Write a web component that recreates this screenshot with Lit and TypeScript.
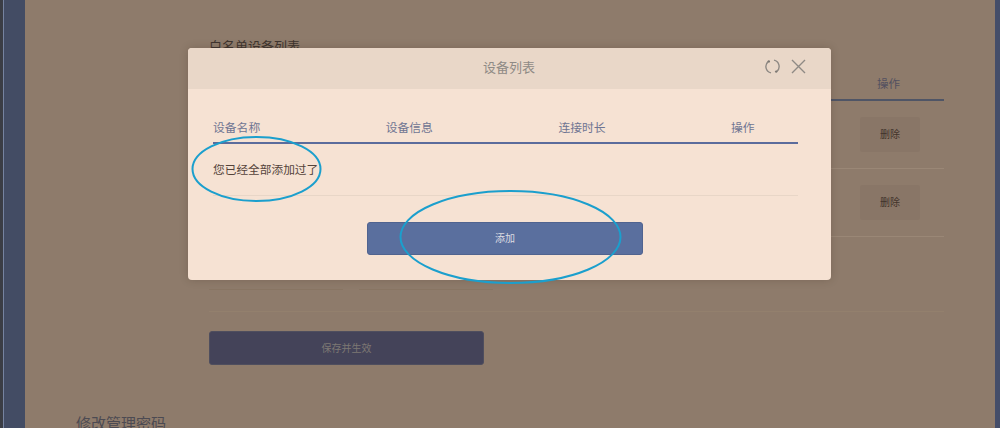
import { LitElement, html, css } from "lit";
import { customElement } from "lit/decorators.js";

@customElement("app-root")
export class AppRoot extends LitElement {
  static styles = css`
    :host {
      display: block;
      position: relative;
      width: 1000px;
      height: 428px;
      overflow: hidden;
      background: #8e7b6b;
      font-family: "Noto Sans CJK SC", "Noto Sans", sans-serif;
    }
    .page { display: flex; height: 428px; }
    .rail-left { width: 25px; flex: none; display: flex; }
    .rail-left i:nth-child(1) { width: 3px; background: #3b3d45; }
    .rail-left i:nth-child(2) { width: 1px; background: #7683a0; }
    .rail-left i:nth-child(3) { flex: 1; background: #434c64; }
    .rail-right { width: 5px; flex: none; background: #444d69; }
    .main { flex: 1; min-width: 0; padding: 38px 51px 0 184px; }
    .section-title { font-size: 13px; line-height: 16px; color: #3f352f; }
    .thead {
      display: flex; justify-content: flex-end;
      margin-top: 21px; height: 24px; border-bottom: 2px solid #4f5566;
      font-size: 11.5px; line-height: 17px; color: #535060;
    }
    .thead span { width: 67px; }
    .trow {
      display: flex; justify-content: flex-end; align-items: center;
      height: 67px; border-bottom: 1px solid #9a8776;
    }
    .del {
      width: 60px; height: 35px; margin-right: 24px; margin-top: -1px; box-sizing: border-box;
      display: flex; align-items: center; justify-content: center;
      background: #897667; border-radius: 2px;
      font-size: 10px; line-height: 14px; color: #41332b; padding-bottom: 1px;
    }
    .inputs { display: flex; gap: 16px; margin-top: 19px; padding-bottom: 21px; border-bottom: 1px solid #93806d; }
    .inputs i { width: 134px; height: 34px; box-sizing: border-box; border-bottom: 1px solid #887563; }
    .save {
      width: 275px; height: 34px; margin-top: 19px; box-sizing: border-box;
      display: flex; align-items: center; justify-content: center;
      background: #444359; border: 1px solid #4f4e5e; border-radius: 3px;
      font-size: 10px; color: #7d7873; padding-bottom: 2px;
    }
    .pw-title { margin: 48px 0 0 -133px; font-size: 15px; line-height: 20px; color: #4c4a52; white-space: nowrap; }

    .shadow, .modal {
      position: absolute; left: 188px; top: 48px; width: 643px; height: 232px; border-radius: 4px;
    }
    .shadow { box-shadow: 0 0 9px rgba(50, 35, 25, 0.22); }
    .modal {
      background: #f6e2d3; overflow: hidden;
      display: flex; flex-direction: column;
    }
    .m-head {
      height: 41px; flex: none; background: #e9d7c8;
      display: flex; align-items: center; justify-content: center; position: relative;
      font-size: 13px; color: #8f8a85; padding: 0 1px 4px 0; box-sizing: border-box;
    }
    .m-tools { position: absolute; left: 577px; top: 11px; display: flex; gap: 11px; }
    .m-tools svg { display: block; }
    .m-body { padding: 0 33px 0 25px; flex: 1; display: flex; flex-direction: column; }
    .m-thead {
      display: grid; grid-template-columns: repeat(4, 172.7px);
      margin-top: 30px; height: 25px; box-sizing: border-box;
      border-bottom: 2px solid #5b6c9c;
      font-size: 11.8px; line-height: 15px; color: #6f7592;
    }
    .m-empty {
      height: 52px; box-sizing: border-box; border-bottom: 1px solid #e8d6c7;
      display: flex; align-items: center;
      font-size: 11.7px; color: #54433a; padding-bottom: 2px;
    }
    .add {
      width: 276px; height: 33px; margin: 26px 0 0 154px; box-sizing: border-box;
      display: flex; align-items: center; justify-content: center;
      background: #5a6f9e; border: 1px solid #50638f; border-radius: 3px;
      font-size: 10px; color: #dcdce2; padding-bottom: 2px;
    }
    .marks { position: absolute; left: 0; top: 0; pointer-events: none; }
  `;

  render() {
    return html`
      <div class="page">
        <div class="rail-left"><i></i><i></i><i></i></div>
        <div class="main">
          <div class="section-title">白名单设备列表</div>
          <div class="thead"><span>操作</span></div>
          <div class="trow"><div class="del">删除</div></div>
          <div class="trow"><div class="del">删除</div></div>
          <div class="inputs"><i></i><i></i></div>
          <div class="save">保存并生效</div>
          <div class="pw-title">修改管理密码</div>
        </div>
        <div class="rail-right"></div>
      </div>

      <div class="shadow"></div>
      <div class="modal">
        <div class="m-head">
          设备列表
          <div class="m-tools">
            <svg width="15" height="15" viewBox="0 0 15 15" fill="none" stroke="#8f8a85" stroke-width="1.4">
              <path d="M9 1.1A6.5 6.5 0 0 1 11.8 12.4" />
              <path d="M6 13.9A6.5 6.5 0 0 1 3.2 2.6" />
              <circle cx="11.2" cy="12.6" r="1.2" fill="#7d7873" stroke="none" />
              <circle cx="3.8" cy="2.4" r="1.2" fill="#7d7873" stroke="none" />
            </svg>
            <svg width="15" height="15" viewBox="0 0 15 15" fill="none" stroke="#8f8a85" stroke-width="1.4">
              <path d="M1 1L14 14M14 1L1 14" />
            </svg>
          </div>
        </div>
        <div class="m-body">
          <div class="m-thead"><span>设备名称</span><span>设备信息</span><span>连接时长</span><span>操作</span></div>
          <div class="m-empty">您已经全部添加过了</div>
          <div class="add">添加</div>
        </div>
      </div>

      <svg class="marks" width="1000" height="428" fill="none" stroke="#1b9fcd" stroke-width="2">
        <ellipse cx="256.5" cy="169" rx="64" ry="32" />
        <ellipse cx="510.5" cy="237" rx="110" ry="46" />
      </svg>
    `;
  }
}
